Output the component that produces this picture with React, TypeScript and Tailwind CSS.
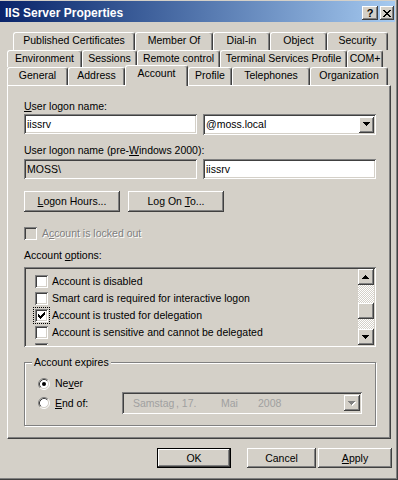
import React from "react";

// classic win2k bevels
const raised =
  "shadow-[inset_-1px_-1px_0_#404040,inset_1px_1px_0_#ffffff,inset_-2px_-2px_0_#808080]";
const sunken =
  "shadow-[inset_1px_1px_0_#808080,inset_-1px_-1px_0_#ffffff,inset_2px_2px_0_#404040,inset_-2px_-2px_0_#d4d0c8]";

function Arrow({ up = false, disabled = false }: { up?: boolean; disabled?: boolean }) {
  const d = up
    ? "M3 0h1v1h1v1h1v1h1v1H0V3h1V2h1V1h1z"
    : "M0 0h7v1H6v1H5v1H4v1H3V3H2V2H1V1H0z";
  return (
    <svg width="8" height="5" viewBox="0 0 8 5" shapeRendering="crispEdges">
      {disabled && <path d={d} fill="#ffffff" transform="translate(1 1)" />}
      <path d={d} fill={disabled ? "#808080" : "#000000"} />
    </svg>
  );
}

function CheckBox({ checked = false, disabled = false, focus = false }: { checked?: boolean; disabled?: boolean; focus?: boolean }) {
  return (
    <span
      className={`relative inline-block w-[13px] h-[13px] shrink-0 ${sunken} ${
        disabled ? "bg-[#d4d0c8]" : "bg-white"
      } ${focus ? "outline-1 outline-dotted outline-black outline-offset-[1px]" : ""}`}
    >
      {checked && (
        <svg width="13" height="13" viewBox="0 0 13 13" shapeRendering="crispEdges" className="absolute left-0 top-0">
          <rect x="3" y="5" width="1" height="3" />
          <rect x="4" y="6" width="1" height="3" />
          <rect x="5" y="7" width="1" height="3" />
          <rect x="6" y="6" width="1" height="3" />
          <rect x="7" y="5" width="1" height="3" />
          <rect x="8" y="4" width="1" height="3" />
          <rect x="9" y="3" width="1" height="3" />
        </svg>
      )}
    </span>
  );
}

function Radio({ checked = false }: { checked?: boolean }) {
  return (
    <svg width="12" height="12" viewBox="0 0 12 12" className="shrink-0">
      <circle cx="6" cy="6" r="4.5" fill="#ffffff" />
      <path d="M2.11 9.89A5.5 5.5 0 0 1 9.89 2.11" stroke="#808080" fill="none" />
      <path d="M9.89 2.11A5.5 5.5 0 0 1 2.11 9.89" stroke="#ffffff" fill="none" />
      <path d="M2.82 9.18A4.5 4.5 0 0 1 9.18 2.82" stroke="#404040" fill="none" />
      <path d="M9.18 2.82A4.5 4.5 0 0 1 2.82 9.18" stroke="#d4d0c8" fill="none" />
      {checked && <circle cx="6" cy="6" r="2" fill="#000000" />}
    </svg>
  );
}

function Tab({ label, w, active = false }: { label: string; w: string; active?: boolean }) {
  return (
    <div
      className={`${w} ${
        active ? "h-[21px] -mt-[2px] -mb-[1px] relative z-10" : "h-full"
      } shrink-0 flex justify-center pt-[1px] bg-[#d4d0c8] border-t border-l border-r border-t-white border-l-white border-r-[#404040] rounded-t-[3px] shadow-[inset_-1px_0_0_#808080] whitespace-nowrap`}
    >
      {label}
    </div>
  );
}

const tabRows = [
  {
    cls: "ml-[13px] h-[18px]",
    tabs: [
      ["Published Certificates", "w-[122px]"],
      ["Member Of", "w-[78px]"],
      ["Dial-in", "w-[57px]"],
      ["Object", "w-[57px]"],
      ["Security", "w-[61px]"],
    ],
  },
  {
    cls: "ml-[7px] h-[17px]",
    tabs: [
      ["Environment", "w-[75px]"],
      ["Sessions", "w-[55px]"],
      ["Remote control", "w-[83px]"],
      ["Terminal Services Profile", "w-[127px]"],
      ["COM+", "w-[36px]"],
    ],
  },
  {
    cls: "ml-[7px] h-[18px]",
    tabs: [
      ["General", "w-[61px]"],
      ["Address", "w-[57px]"],
      ["Account", "w-[63px]"],
      ["Profile", "w-[44px]"],
      ["Telephones", "w-[78px]"],
      ["Organization", "w-[78px]"],
    ],
  },
];

// last row is scrolled mostly out of view, only its box edge shows
const options: [string, boolean][] = [
  ["Account is disabled", false],
  ["Smart card is required for interactive logon", false],
  ["Account is trusted for delegation", true],
  ["Account is sensitive and cannot be delegated", false],
  ["", false],
];

export default function App() {
  return (
    <div className="w-[398px] h-[480px] overflow-hidden bg-[#d4d0c8] text-black text-[10.5px] leading-[13px] font-['Liberation_Sans',Arial,sans-serif] pt-[1px] shadow-[inset_-1px_-1px_0_#404040,inset_-2px_-2px_0_#808080]">
      {/* title bar */}
      <div className="w-[395px] h-[21px] flex justify-between bg-linear-to-r from-[#0a246a] to-[#a6caf0]">
        <div className="pl-[5px] pt-[5px] text-white font-bold text-[12px] leading-[14px]">
          IIS Server Properties
        </div>
        <div className="flex gap-[2px] mt-[5px] mr-[1px] h-[14px]">
          <div className={`w-[16px] h-[14px] bg-[#d4d0c8] ${raised} flex items-center justify-center font-bold text-[11px] leading-[11px] pt-[1px]`}>
            ?
          </div>
          <div className={`w-[14px] h-[14px] bg-[#d4d0c8] ${raised} flex items-center justify-center`}>
            <svg width="8" height="7" viewBox="0 0 8 7" shapeRendering="crispEdges">
              <path d="M0 0h2v1h1v1h2V1h1V0h2v1H7v1H6v1H5v1h1v1h1v1h1v1H6V6H5V5H3v1H2v1H0V6h1V5h1V4h1V3H2V2H1V1H0z" />
            </svg>
          </div>
        </div>
      </div>

      {/* tabs */}
      <div className="mt-[10px] flex flex-col">
        {tabRows.map((row, i) => (
          <div key={i} className={`flex ${row.cls}`}>
            {row.tabs.map(([label, w]) => (
              <Tab key={label} label={label} w={w} active={label === "Account"} />
            ))}
          </div>
        ))}
      </div>

      {/* page */}
      <div className="ml-[7px] w-[384px] h-[354px] border border-t-white border-l-white border-r-[#404040] border-b-[#404040] shadow-[inset_-1px_-1px_0_#808080] pl-[16px]">
        <div className="mt-[14px]">
          <u>U</u>ser logon name:
        </div>
        <div className="mt-[1px] flex gap-[6px]">
          <div className={`w-[173px] h-[20px] bg-white ${sunken} flex items-center pl-[3px]`}>iissrv</div>
          <div className={`w-[173px] h-[21px] bg-white ${sunken} flex items-center justify-between pl-[3px] pr-[2px]`}>
            <span>@moss.local</span>
            <div className={`w-[15px] h-[16px] bg-[#d4d0c8] ${raised} flex items-center justify-center`}>
              <Arrow />
            </div>
          </div>
        </div>

        <div className="mt-[9px]">
          User logon name (pre-<u>W</u>indows 2000):
        </div>
        <div className="mt-[2px] flex gap-[6px]">
          <div className={`w-[173px] h-[20px] bg-[#d4d0c8] ${sunken} flex items-center pl-[3px]`}>MOSS\</div>
          <div className={`w-[173px] h-[20px] bg-white ${sunken} flex items-center pl-[3px]`}>iissrv</div>
        </div>

        <div className="mt-[12px] flex gap-[8px]">
          <div className={`w-[96px] h-[21px] ${raised} flex items-center justify-center`}>
            <span>
              <u>L</u>ogon Hours...
            </span>
          </div>
          <div className={`w-[96px] h-[21px] ${raised} flex items-center justify-center`}>
            <span>
              Log On <u>T</u>o...
            </span>
          </div>
        </div>

        <div className="mt-[15px] h-[13px] flex items-center gap-[5px]">
          <CheckBox disabled />
          <span className="text-[#808080] [text-shadow:1px_1px_0_#ffffff]">
            A<u>c</u>count is locked out
          </span>
        </div>

        <div className="mt-[9px]">
          Account <u>o</u>ptions:
        </div>
        <div className={`mt-[5px] w-[352px] h-[80px] ${sunken} p-[2px] flex`}>
          <div className="flex-1 overflow-hidden pt-[4px] pl-[9px]">
            {options.map(([label, checked], i) => (
              <div key={i} className="h-[17px] flex items-center gap-[4px] whitespace-nowrap">
                <CheckBox checked={checked} focus={i === 2} />
                {label && <span>{label}</span>}
              </div>
            ))}
          </div>
          <div className="w-[16px] flex flex-col">
            <div className={`h-[16px] ${raised} flex items-center justify-center`}>
              <Arrow up />
            </div>
            <div className="h-[18px] bg-[conic-gradient(#ffffff_25%,#d4d0c8_0_50%,#ffffff_0_75%,#d4d0c8_0)] bg-[length:2px_2px]" />
            <div className={`h-[16px] ${raised}`} />
            <div className="h-[10px] bg-[conic-gradient(#ffffff_25%,#d4d0c8_0_50%,#ffffff_0_75%,#d4d0c8_0)] bg-[length:2px_2px]" />
            <div className={`h-[16px] ${raised} flex items-center justify-center`}>
              <Arrow />
            </div>
          </div>
        </div>

        <fieldset className="mt-[9px] w-[352px] h-[70px] min-w-0 border border-[#808080] shadow-[inset_1px_1px_0_#ffffff,1px_1px_0_#ffffff] pl-[13px]">
          <legend className="ml-[-6px] px-[2px] bg-[#d4d0c8] leading-[13px]">Account expires</legend>
          <div className="mt-[8px] h-[13px] flex items-center gap-[5px]">
            <Radio checked />
            <span>
              Ne<u>v</u>er
            </span>
          </div>
          <div className="mt-[2px] h-[22px] flex items-center">
            <div className="w-[84px] flex items-center gap-[5px]">
              <Radio />
              <span>
                <u>E</u>nd of:
              </span>
            </div>
            <div className={`w-[240px] h-[22px] ${sunken} flex items-center pl-[11px] pr-[2px] text-[#a0a0a0] whitespace-nowrap`}>
              <span className="w-[43px]">Samstag</span>
              <span className="w-[45px]">, 17.</span>
              <span className="w-[37px]">Mai</span>
              <span className="flex-1">2008</span>
              <div className={`w-[16px] h-[16px] ${raised} flex items-center justify-center`}>
                <Arrow disabled />
              </div>
            </div>
          </div>
        </fieldset>
      </div>

      {/* dialog buttons */}
      <div className="mt-[9px] flex">
        <div className={`ml-[157px] w-[74px] h-[20px] border border-black ${raised} flex items-center justify-center`}>
          OK
        </div>
        <div className={`ml-[16px] w-[69px] h-[20px] ${raised} flex items-center justify-center`}>Cancel</div>
        <div className={`ml-[2px] w-[74px] h-[20px] ${raised} flex items-center justify-center`}>
          <span>
            <u>A</u>pply
          </span>
        </div>
      </div>
    </div>
  );
}
